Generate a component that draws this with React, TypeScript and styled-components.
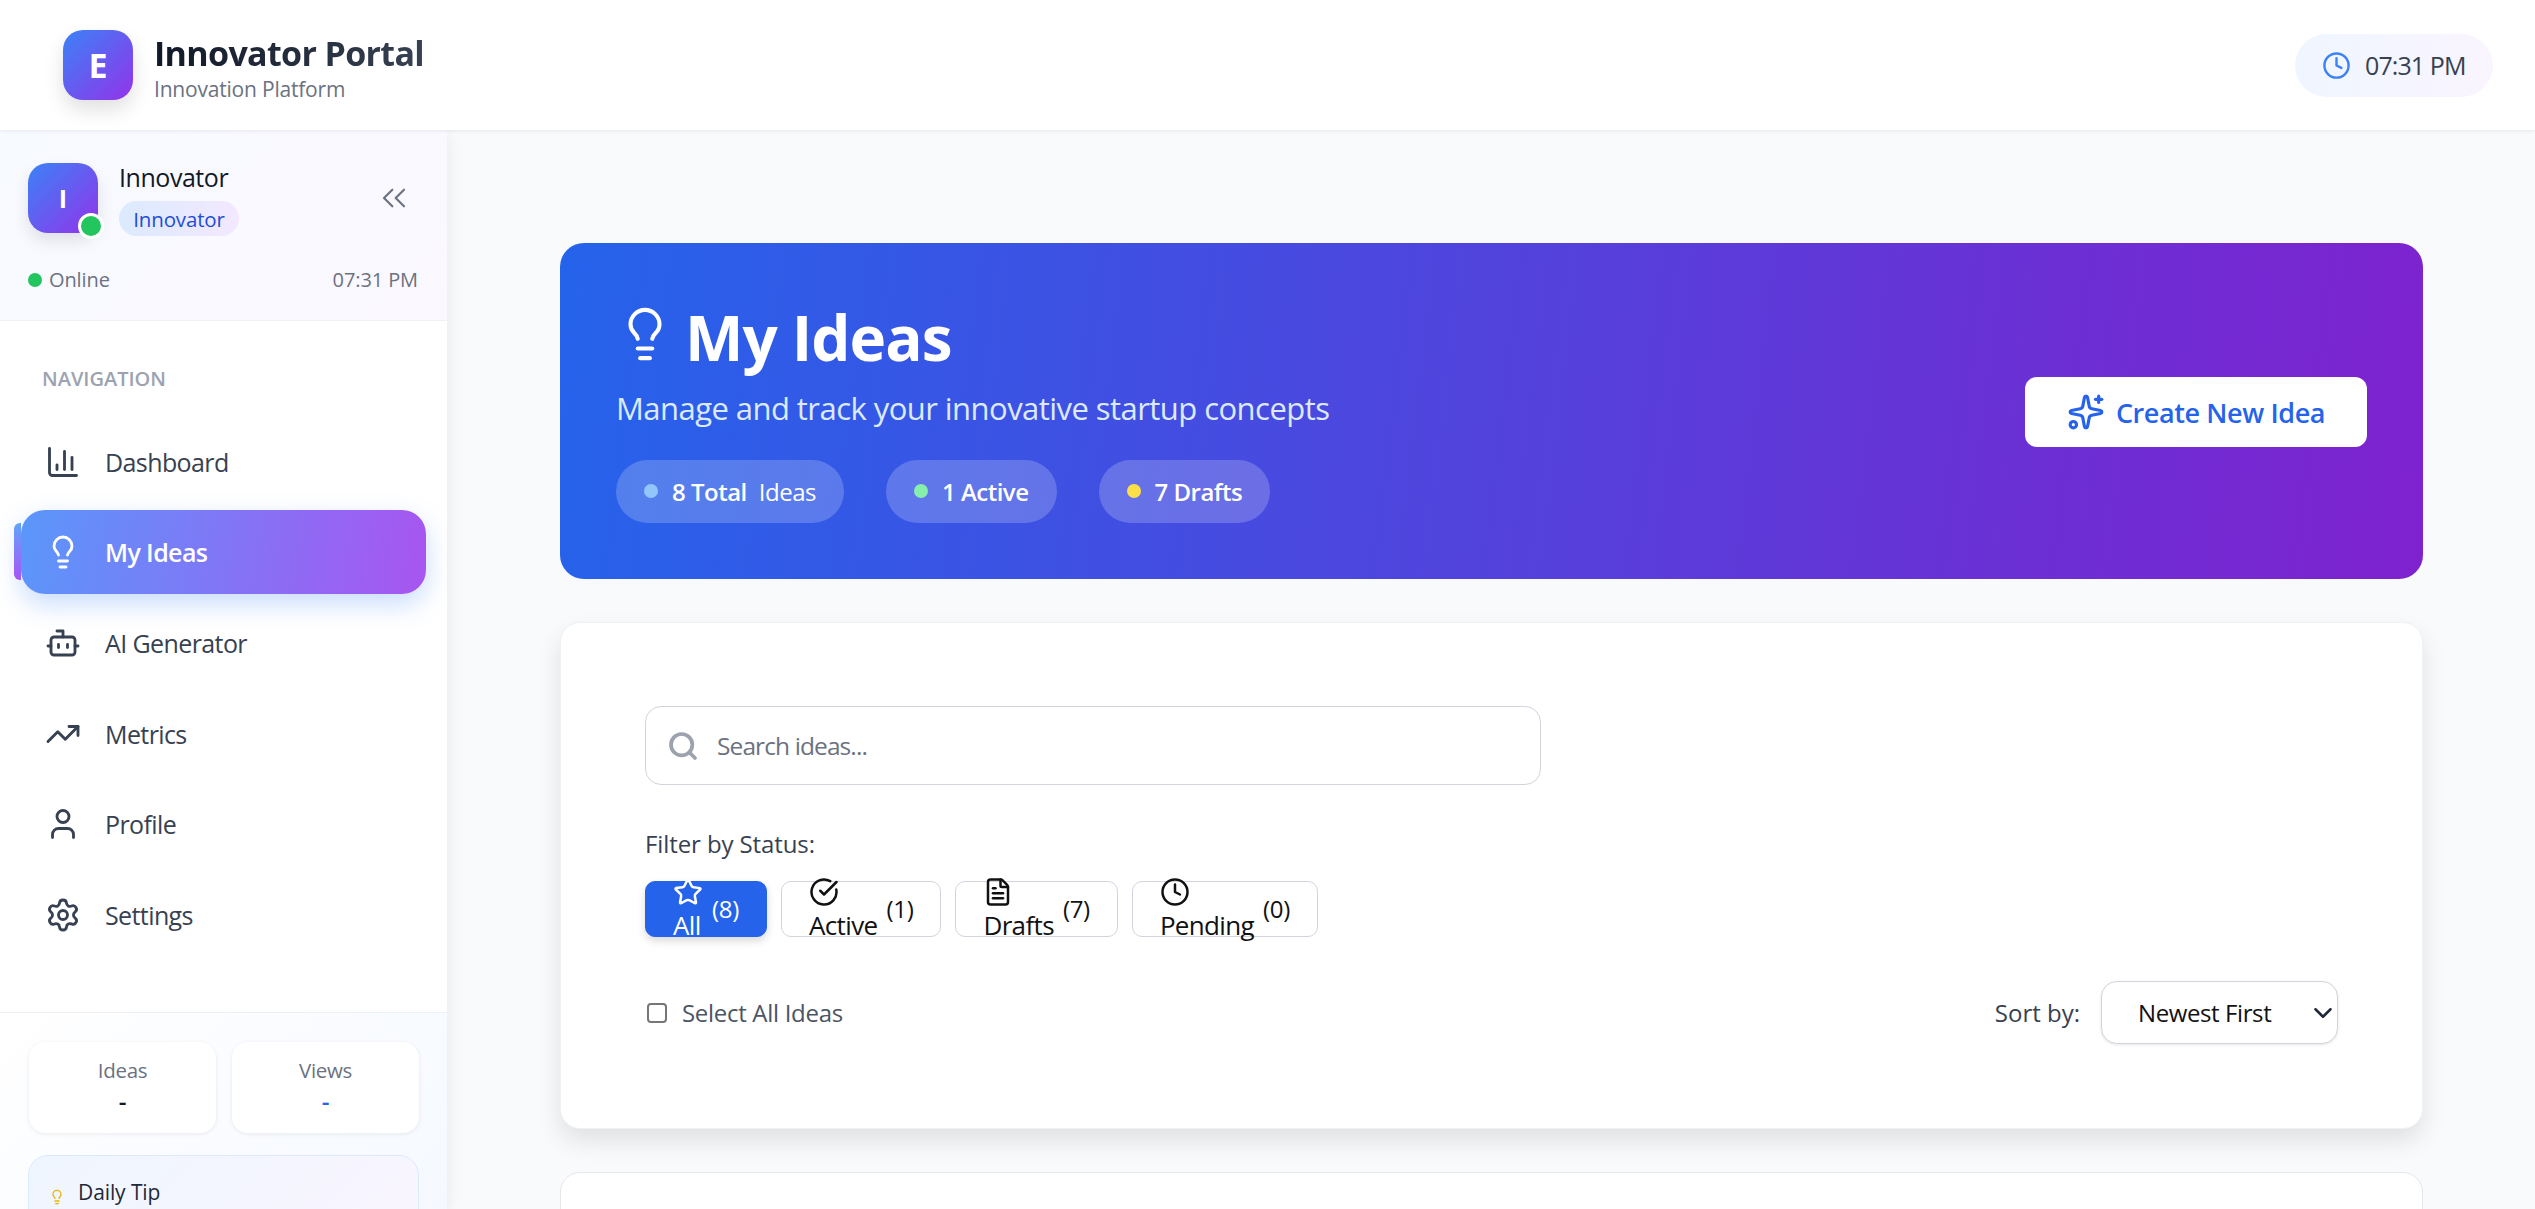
import React from 'react';
import styled, { createGlobalStyle } from 'styled-components';
import {
  BarChart3,
  Bot,
  CheckCircle,
  ChevronDown,
  ChevronsLeft,
  Clock,
  FileText,
  Lightbulb,
  Search,
  Settings,
  Sparkles,
  Star,
  TrendingUp,
  User,
} from 'lucide-react';

const GlobalStyle = createGlobalStyle`
  * {
    box-sizing: border-box;
  }
  html, body {
    margin: 0;
    padding: 0;
    height: 100%;
    overflow: hidden;
  }
  body {
    font-family: 'Open Sans', 'Noto Sans', sans-serif;
    background: #f9fafb;
  }
`;

const Shell = styled.div`
  height: 100vh;
  display: flex;
  flex-direction: column;
  overflow: hidden;
`;

const TopBar = styled.header`
  height: 130px;
  flex-shrink: 0;
  display: flex;
  align-items: center;
  justify-content: space-between;
  padding: 0 42px 0 63px;
  background: #fff;
  box-shadow: 0 1px 4px rgba(0, 0, 0, 0.08);
  position: relative;
  z-index: 3;
`;

const Brand = styled.div`
  display: flex;
  align-items: center;
  gap: 21px;
`;

const LogoMark = styled.div`
  width: 70px;
  height: 70px;
  border-radius: 20px;
  background: linear-gradient(135deg, #3b82f6, #9333ea);
  box-shadow: 0 10px 20px rgba(0, 0, 0, 0.12);
  color: #fff;
  font-size: 34px;
  font-weight: 700;
  display: flex;
  align-items: center;
  justify-content: center;
`;

const BrandText = styled.div`
  display: flex;
  flex-direction: column;
  padding-top: 3px;
`;

const BrandTitle = styled.div`
  font-size: 34px;
  line-height: 42px;
  font-weight: 700;
  letter-spacing: -0.65px;
  background: linear-gradient(90deg, #111827, #374151);
  -webkit-background-clip: text;
  background-clip: text;
  color: transparent;
`;

const BrandSub = styled.div`
  margin-top: 2px;
  font-size: 21px;
  line-height: 26px;
  font-weight: 500;
  letter-spacing: -0.2px;
  color: #6b7280;
`;

const ClockPill = styled.div`
  height: 63px;
  width: 198px;
  display: flex;
  align-items: center;
  gap: 14px;
  padding-left: 27px;
  border-radius: 32px;
  background: linear-gradient(90deg, #eff6ff, #faf5ff);
  color: #374151;
  font-size: 25px;
  font-weight: 500;
  letter-spacing: -0.9px;
  svg {
    color: #3b82f6;
  }
`;

const Body = styled.div`
  flex: 1;
  min-height: 0;
  display: flex;
`;

const Sidebar = styled.aside`
  width: 447px;
  flex-shrink: 0;
  display: flex;
  flex-direction: column;
  background: #fff;
  box-shadow: 0 4px 16px rgba(0, 0, 0, 0.08);
  position: relative;
  z-index: 2;
`;

const UserPanel = styled.div`
  height: 191px;
  flex-shrink: 0;
  padding: 33px 29px 0 28px;
  background: linear-gradient(135deg, #f7faff, #fbf8ff);
  border-bottom: 1px solid #f0f1f4;
`;

const UserRow = styled.div`
  height: 70px;
  display: flex;
  align-items: center;
  gap: 21px;
`;

const Avatar = styled.div`
  width: 70px;
  height: 70px;
  border-radius: 20px;
  background: linear-gradient(135deg, #3b82f6, #9333ea);
  box-shadow: 0 8px 16px rgba(0, 0, 0, 0.1);
  color: #fff;
  font-size: 25px;
  font-weight: 700;
  display: flex;
  align-items: center;
  justify-content: center;
  position: relative;
`;

const AvatarBadge = styled.span`
  position: absolute;
  right: -6px;
  bottom: -6px;
  width: 26px;
  height: 26px;
  border-radius: 50%;
  background: #22c55e;
  border: 3px solid #fff;
`;

const UserInfo = styled.div`
  flex: 1;
  display: flex;
  flex-direction: column;
  align-items: flex-start;
  gap: 9px;
  margin-top: 2px;
`;

const UserName = styled.div`
  font-size: 25px;
  line-height: 30px;
  font-weight: 500;
  letter-spacing: -0.45px;
  color: #111827;
`;

const RoleChip = styled.div`
  height: 35px;
  width: 120px;
  display: flex;
  align-items: center;
  justify-content: center;
  border-radius: 18px;
  background: linear-gradient(90deg, #dbeafe, #f3e8ff);
  color: #1d4ed8;
  font-size: 20.5px;
  font-weight: 500;
  letter-spacing: -0.15px;
`;

const CollapseIcon = styled.div`
  color: #6b7280;
  display: flex;
  padding-right: 4px;
`;

const StatusRow = styled.div`
  display: flex;
  align-items: center;
  justify-content: space-between;
  margin-top: 34px;
  color: #6b7280;
  font-size: 20px;
  line-height: 26px;
  letter-spacing: -0.1px;
`;

const OnlineLabel = styled.div`
  display: flex;
  align-items: center;
  gap: 7px;
`;

const Dot = styled.span<{ $color: string }>`
  width: 14px;
  height: 14px;
  border-radius: 50%;
  background: ${({ $color }) => $color};
`;

const Nav = styled.nav`
  height: 691px;
  flex-shrink: 0;
  padding: 45px 21px 0;
  display: flex;
  flex-direction: column;
  gap: 6.7px;
`;

const NavTitle = styled.div`
  margin: 0 0 21px 21px;
  font-size: 20px;
  line-height: 26px;
  font-weight: 600;
  color: #9ca3af;
  text-transform: uppercase;
`;

const NavItem = styled.a<{ $active?: boolean }>`
  height: 84px;
  flex-shrink: 0;
  display: flex;
  align-items: center;
  gap: 24px;
  padding-left: 24px;
  border-radius: 24px;
  position: relative;
  font-size: 25px;
  font-weight: ${({ $active }) => ($active ? 600 : 500)};
  letter-spacing: -0.6px;
  color: ${({ $active }) => ($active ? '#fff' : '#374151')};
  background: ${({ $active }) =>
    $active ? 'linear-gradient(100deg, #5a97fb, #a855f0)' : 'transparent'};
  box-shadow: ${({ $active }) =>
    $active ? '0 10px 26px rgba(59, 130, 246, 0.28)' : 'none'};
`;

const ActiveMarker = styled.span`
  position: absolute;
  left: -7px;
  top: 13px;
  width: 7px;
  height: 57px;
  border-radius: 6px 0 0 6px;
  background: linear-gradient(180deg, #60a5fa, #a855f7);
`;

const SidebarFooter = styled.div`
  flex: 1;
  padding: 29px 29px 0;
  border-top: 1px solid #eef0f4;
  background: linear-gradient(135deg, #ffffff, #f4f8ff);
`;

const StatGrid = styled.div`
  display: grid;
  grid-template-columns: 187px 187px;
  gap: 16px;
`;

const StatCard = styled.div`
  height: 91px;
  padding-top: 15px;
  border-radius: 16px;
  background: #fff;
  box-shadow: 0 1px 4px rgba(0, 0, 0, 0.08);
  text-align: center;
`;

const StatLabel = styled.div`
  font-size: 20.5px;
  line-height: 26px;
  letter-spacing: -0.3px;
  color: #6b7280;
`;

const StatValue = styled.div<{ $accent?: boolean }>`
  margin-top: 2px;
  font-size: 24px;
  line-height: 32px;
  font-weight: 600;
  color: ${({ $accent }) => ($accent ? '#2563eb' : '#111827')};
`;

const TipCard = styled.div`
  margin: 22px 0 0 -1px;
  height: 120px;
  width: 391px;
  padding: 22px 20px;
  display: flex;
  align-items: flex-start;
  gap: 13px;
  border: 1px solid #dbeafe;
  border-radius: 20px;
  background: linear-gradient(135deg, #eff6ff, #faf5ff);
  color: #1f2937;
  font-size: 21px;
  line-height: 28px;
  font-weight: 500;
  letter-spacing: -0.1px;
  svg {
    color: #eab308;
    margin-top: 11px;
    flex-shrink: 0;
  }
`;

const Main = styled.main`
  flex: 1;
  min-width: 0;
  padding: 113px 112px 0 113px;
  overflow: hidden;
  display: flex;
  flex-direction: column;
  gap: 43px;
`;

const Banner = styled.section`
  height: 336px;
  flex-shrink: 0;
  padding: 0 56px;
  display: flex;
  align-items: center;
  justify-content: space-between;
  border-radius: 24px;
  background: linear-gradient(97deg, #2563eb, #7e22ce);
  color: #fff;
`;

const BannerText = styled.div`
  display: flex;
  flex-direction: column;
`;

const BannerHeading = styled.h1`
  margin: 0;
  display: flex;
  align-items: center;
  gap: 11px;
  height: 80px;
  padding-bottom: 6px;
  font-size: 62px;
  line-height: 74px;
  font-weight: 700;
  letter-spacing: -1px;
  svg {
    flex-shrink: 0;
    margin-bottom: 6px;
  }
`;

const BannerSub = styled.p`
  margin: 8px 0 0;
  font-size: 31px;
  line-height: 40px;
  letter-spacing: -0.55px;
  color: #dbeafe;
`;

const BannerStats = styled.div`
  display: flex;
  gap: 42px;
  margin-top: 32px;
`;

const BannerStat = styled.div`
  height: 63px;
  padding: 0 28px;
  display: flex;
  align-items: center;
  gap: 14px;
  border-radius: 32px;
  background: rgba(255, 255, 255, 0.2);
  font-size: 24px;
  font-weight: 600;
  letter-spacing: -0.5px;
`;

const LightWord = styled.span`
  font-weight: 400;
  margin-left: 12px;
`;

const CreateButton = styled.button`
  width: 342px;
  height: 70px;
  margin-top: 2px;
  display: flex;
  align-items: center;
  justify-content: center;
  gap: 11px;
  border: none;
  border-radius: 12px;
  background: #fff;
  color: #2563eb;
  font-family: inherit;
  font-size: 27px;
  font-weight: 600;
  letter-spacing: -0.4px;
`;

const FilterCard = styled.section`
  height: 507px;
  flex-shrink: 0;
  padding: 83px 84px 0;
  background: #fff;
  border: 1px solid #f0f1f4;
  border-radius: 20px;
  box-shadow: 0 12px 24px rgba(0, 0, 0, 0.1);
`;

const SearchBox = styled.label`
  width: 896px;
  height: 79px;
  display: flex;
  align-items: center;
  gap: 16px;
  padding-left: 21px;
  border: 1px solid #d1d5db;
  border-radius: 16px;
  color: #9ca3af;
`;

const SearchInput = styled.input`
  flex: 1;
  border: none;
  outline: none;
  background: transparent;
  font-family: inherit;
  font-size: 24.5px;
  letter-spacing: -0.9px;
  color: #111827;
  &::placeholder {
    color: #6b7280;
    opacity: 1;
  }
`;

const FilterLabel = styled.div`
  margin-top: 44px;
  font-size: 24px;
  line-height: 30px;
  font-weight: 500;
  letter-spacing: -0.1px;
  color: #374151;
`;

const FilterRow = styled.div`
  display: flex;
  gap: 14px;
  margin-top: 22px;
`;

const FilterButton = styled.button<{ $active?: boolean }>`
  height: 56px;
  min-width: 122px;
  padding: 0 27px;
  display: flex;
  align-items: center;
  justify-content: center;
  gap: 9px;
  border: 1px solid ${({ $active }) => ($active ? '#2563eb' : '#d1d5db')};
  border-radius: 10px;
  background: ${({ $active }) => ($active ? '#2563eb' : '#fff')};
  box-shadow: ${({ $active }) =>
    $active ? '0 4px 8px rgba(0, 0, 0, 0.15)' : 'none'};
  color: ${({ $active }) => ($active ? '#fff' : '#111')};
  font-family: inherit;
  font-size: 26px;
  font-weight: 500;
  letter-spacing: -0.65px;
`;

const FilterStack = styled.span`
  display: flex;
  flex-direction: column;
  align-items: flex-start;
  line-height: 32px;
  svg {
    display: block;
    margin-bottom: 2.5px;
  }
`;

const FilterCount = styled.span`
  font-size: 24px;
  line-height: 30px;
  letter-spacing: -0.3px;
`;

const OptionsRow = styled.div`
  display: flex;
  align-items: center;
  justify-content: space-between;
  margin-top: 44px;
`;

const SelectAll = styled.label`
  display: flex;
  align-items: center;
  gap: 15px;
  font-size: 24px;
  letter-spacing: -0.3px;
  color: #4b5563;
`;

const CheckBox = styled.input`
  appearance: none;
  width: 20px;
  height: 20px;
  margin: 0 0 0 2px;
  background: #fff;
  border: 2px solid #767676;
  border-radius: 4px;
`;

const SortGroup = styled.div`
  display: flex;
  align-items: center;
  gap: 21px;
  font-size: 24px;
  color: #374151;
`;

const SortWrap = styled.div`
  position: relative;
  display: flex;
  svg {
    position: absolute;
    right: 0;
    top: 17px;
    color: #1f2937;
    pointer-events: none;
  }
`;

const SortSelect = styled.select`
  appearance: none;
  width: 237px;
  height: 63px;
  padding-left: 36px;
  border: 1px solid #d1d5db;
  border-radius: 16px;
  background: #fff;
  box-shadow: 0 1px 3px rgba(0, 0, 0, 0.1);
  color: #111;
  font-family: inherit;
  font-size: 24px;
  letter-spacing: -0.4px;
`;

const ListCard = styled.section`
  height: 300px;
  flex-shrink: 0;
  background: #fff;
  border: 1px solid #e5e7eb;
  border-radius: 20px;
`;

const navLinks = [
  { label: 'Dashboard', icon: BarChart3 },
  { label: 'My Ideas', icon: Lightbulb, active: true },
  { label: 'AI Generator', icon: Bot },
  { label: 'Metrics', icon: TrendingUp },
  { label: 'Profile', icon: User },
  { label: 'Settings', icon: Settings },
];

const filters = [
  { label: 'All', count: 8, icon: Star, active: true },
  { label: 'Active', count: 1, icon: CheckCircle },
  { label: 'Drafts', count: 7, icon: FileText },
  { label: 'Pending', count: 0, icon: Clock },
];

export default function App() {
  return (
    <Shell>
      <GlobalStyle />
      <TopBar>
        <Brand>
          <LogoMark>E</LogoMark>
          <BrandText>
            <BrandTitle>Innovator Portal</BrandTitle>
            <BrandSub>Innovation Platform</BrandSub>
          </BrandText>
        </Brand>
        <ClockPill>
          <Clock size={29} />
          07:31 PM
        </ClockPill>
      </TopBar>
      <Body>
        <Sidebar>
          <UserPanel>
            <UserRow>
              <Avatar>
                I
                <AvatarBadge />
              </Avatar>
              <UserInfo>
                <UserName>Innovator</UserName>
                <RoleChip>Innovator</RoleChip>
              </UserInfo>
              <CollapseIcon>
                <ChevronsLeft size={40} strokeWidth={1.3} />
              </CollapseIcon>
            </UserRow>
            <StatusRow>
              <OnlineLabel>
                <Dot $color="#22c55e" />
                Online
              </OnlineLabel>
              07:31 PM
            </StatusRow>
          </UserPanel>
          <Nav>
            <NavTitle>Navigation</NavTitle>
            {navLinks.map(({ label, icon: Icon, active }) => (
              <NavItem key={label} $active={active}>
                {active && <ActiveMarker />}
                <Icon size={36} strokeWidth={1.9} />
                {label}
              </NavItem>
            ))}
          </Nav>
          <SidebarFooter>
            <StatGrid>
              <StatCard>
                <StatLabel>Ideas</StatLabel>
                <StatValue>-</StatValue>
              </StatCard>
              <StatCard>
                <StatLabel>Views</StatLabel>
                <StatValue $accent>-</StatValue>
              </StatCard>
            </StatGrid>
            <TipCard>
              <Lightbulb size={16} />
              Daily Tip
            </TipCard>
          </SidebarFooter>
        </Sidebar>
        <Main>
          <Banner>
            <BannerText>
              <BannerHeading>
                <Lightbulb size={58} strokeWidth={1.7} />
                My Ideas
              </BannerHeading>
              <BannerSub>Manage and track your innovative startup concepts</BannerSub>
              <BannerStats>
                <BannerStat>
                  <Dot $color="#93c5fd" />
                  <span>
                    8 Total<LightWord>Ideas</LightWord>
                  </span>
                </BannerStat>
                <BannerStat>
                  <Dot $color="#86efac" />
                  1 Active
                </BannerStat>
                <BannerStat>
                  <Dot $color="#fde047" />
                  7 Drafts
                </BannerStat>
              </BannerStats>
            </BannerText>
            <CreateButton>
              <Sparkles size={38} />
              Create New Idea
            </CreateButton>
          </Banner>
          <FilterCard>
            <SearchBox>
              <Search size={32} strokeWidth={2.8} />
              <SearchInput placeholder="Search ideas..." />
            </SearchBox>
            <FilterLabel>Filter by Status:</FilterLabel>
            <FilterRow>
              {filters.map(({ label, count, icon: Icon, active }) => (
                <FilterButton key={label} $active={active}>
                  <FilterStack>
                    <Icon size={30} />
                    {label}
                  </FilterStack>
                  <FilterCount>({count})</FilterCount>
                </FilterButton>
              ))}
            </FilterRow>
            <OptionsRow>
              <SelectAll>
                <CheckBox type="checkbox" />
                Select All Ideas
              </SelectAll>
              <SortGroup>
                Sort by:
                <SortWrap>
                  <SortSelect defaultValue="newest">
                    <option value="newest">Newest First</option>
                  </SortSelect>
                  <ChevronDown size={30} strokeWidth={2} />
                </SortWrap>
              </SortGroup>
            </OptionsRow>
          </FilterCard>
          <ListCard />
        </Main>
      </Body>
    </Shell>
  );
}
